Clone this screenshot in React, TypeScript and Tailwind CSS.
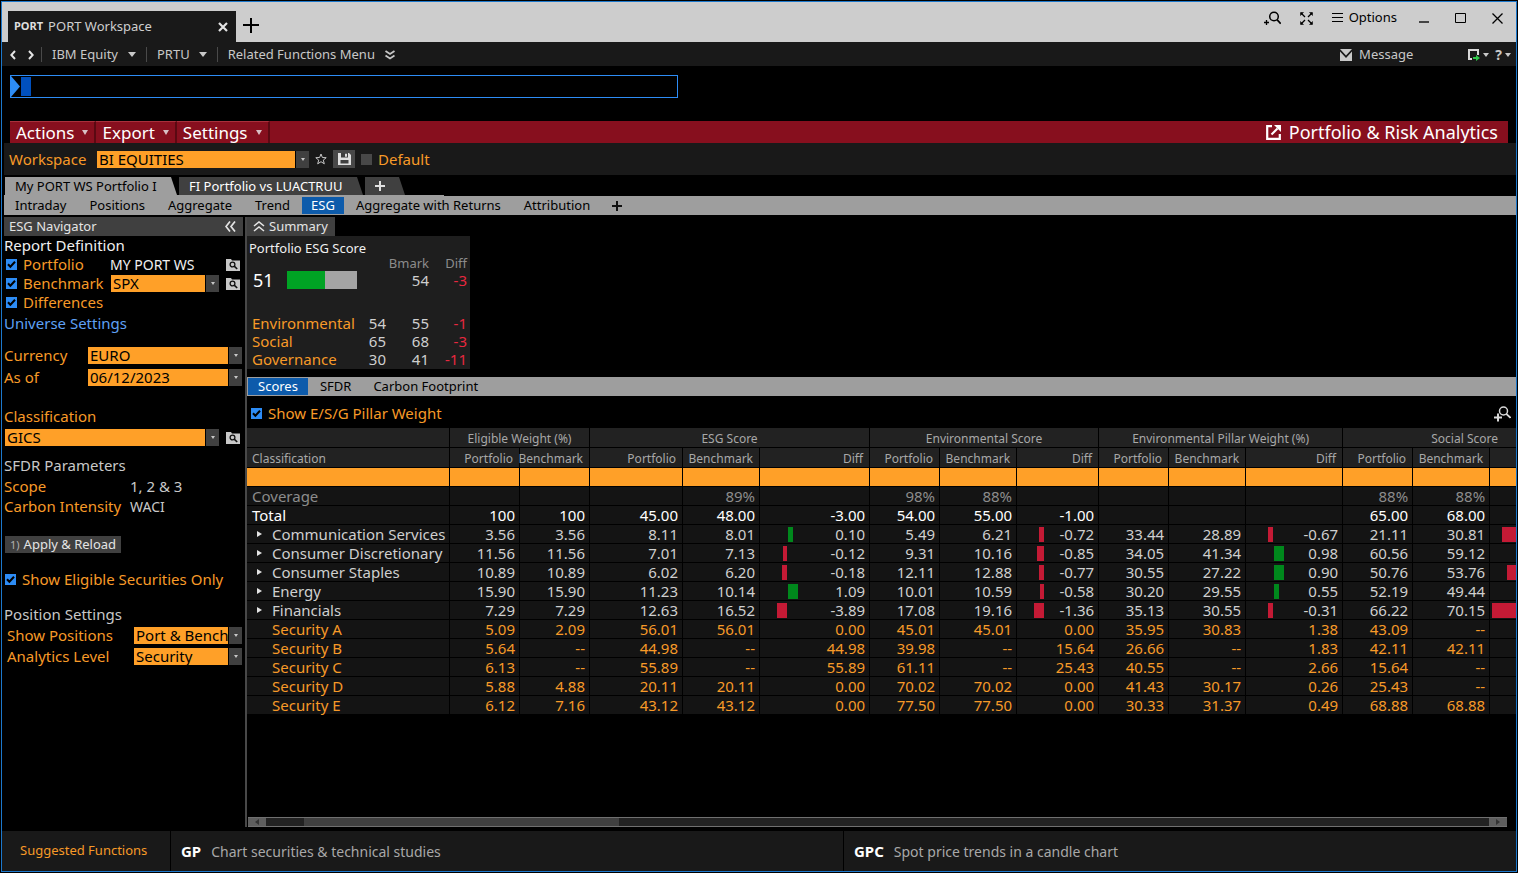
import React from 'react';

interface CellData {
  value?: string;
  bar?: number;
}

interface Row {
  name: string;
  kind: 'coverage' | 'total' | 'sector' | 'security';
  cells: (string | CellData)[];
}

const groups = [
  { title: 'Eligible Weight (%)', columns: ['Portfolio', 'Benchmark'] },
  { title: 'ESG Score', columns: ['Portfolio', 'Benchmark', 'Diff'] },
  { title: 'Environmental Score', columns: ['Portfolio', 'Benchmark', 'Diff'] },
  { title: 'Environmental Pillar Weight (%)', columns: ['Portfolio', 'Benchmark', 'Diff'] },
  { title: 'Social Score', columns: ['Portfolio', 'Benchmark', ''] },
];

const columnWidths = [203, 70, 70, 93, 77, 110, 70, 77, 82, 70, 77, 97, 70, 77, 97];

// bar is the signed length of the diff bar in pixels
const rows: Row[] = [
  { name: 'Coverage', kind: 'coverage', cells: ['', '', '', '89%', '', '98%', '88%', '', '', '', '', '88%', '88%', ''] },
  { name: 'Total', kind: 'total', cells: ['100', '100', '45.00', '48.00', '-3.00', '54.00', '55.00', '-1.00', '', '', '', '65.00', '68.00', ''] },
  { name: 'Communication Services', kind: 'sector', cells: ['3.56', '3.56', '8.11', '8.01', { value: '0.10', bar: 5 }, '5.49', '6.21', { value: '-0.72', bar: -5 }, '33.44', '28.89', { value: '-0.67', bar: -5 }, '21.11', '30.81', { bar: -15 }] },
  { name: 'Consumer Discretionary', kind: 'sector', cells: ['11.56', '11.56', '7.01', '7.13', { value: '-0.12', bar: -4 }, '9.31', '10.16', { value: '-0.85', bar: -7 }, '34.05', '41.34', { value: '0.98', bar: 10 }, '60.56', '59.12', ''] },
  { name: 'Consumer Staples', kind: 'sector', cells: ['10.89', '10.89', '6.02', '6.20', { value: '-0.18', bar: -5 }, '12.11', '12.88', { value: '-0.77', bar: -5 }, '30.55', '27.22', { value: '0.90', bar: 10 }, '50.76', '53.76', { bar: -10 }] },
  { name: 'Energy', kind: 'sector', cells: ['15.90', '15.90', '11.23', '10.14', { value: '1.09', bar: 10 }, '10.01', '10.59', { value: '-0.58', bar: -4 }, '30.20', '29.55', { value: '0.55', bar: 5 }, '52.19', '49.44', ''] },
  { name: 'Financials', kind: 'sector', cells: ['7.29', '7.29', '12.63', '16.52', { value: '-3.89', bar: -10 }, '17.08', '19.16', { value: '-1.36', bar: -10 }, '35.13', '30.55', { value: '-0.31', bar: -5 }, '66.22', '70.15', { bar: -25 }] },
  { name: 'Security A', kind: 'security', cells: ['5.09', '2.09', '56.01', '56.01', '0.00', '45.01', '45.01', '0.00', '35.95', '30.83', '1.38', '43.09', '--', ''] },
  { name: 'Security B', kind: 'security', cells: ['5.64', '--', '44.98', '--', '44.98', '39.98', '--', '15.64', '26.66', '--', '1.83', '42.11', '42.11', ''] },
  { name: 'Security C', kind: 'security', cells: ['6.13', '--', '55.89', '--', '55.89', '61.11', '--', '25.43', '40.55', '--', '2.66', '15.64', '--', ''] },
  { name: 'Security D', kind: 'security', cells: ['5.88', '4.88', '20.11', '20.11', '0.00', '70.02', '70.02', '0.00', '41.43', '30.17', '0.26', '25.43', '--', ''] },
  { name: 'Security E', kind: 'security', cells: ['6.12', '7.16', '43.12', '43.12', '0.00', '77.50', '77.50', '0.00', '30.33', '31.37', '0.49', '68.88', '68.88', ''] },
];

const rowColors = {
  coverage: 'text-[#8c8c8c]',
  total: 'text-white',
  sector: 'text-[#cfcfcf]',
  security: 'text-[#f79a28]',
};

const pillars = [
  { name: 'Environmental', score: 54, bmark: 55, diff: -1 },
  { name: 'Social', score: 65, bmark: 68, diff: -3 },
  { name: 'Governance', score: 30, bmark: 41, diff: -11 },
];

const Caret: React.FC<{ className?: string }> = ({ className = '' }) => (
  <svg viewBox="0 0 8 5" preserveAspectRatio="none" className={`shrink-0 ${className}`} fill="currentColor" aria-hidden="true">
    <path d="M0 0h8L4 5z" />
  </svg>
);

const SearchPlus: React.FC = () => (
  <svg width="17" height="15" viewBox="0 0 17 15" fill="none" stroke="currentColor" aria-hidden="true">
    <circle cx="10" cy="5.5" r="4.3" strokeWidth="1.5" />
    <path d="M13 8.700l3.700 4" strokeWidth="1.700" />
    <path d="M2.500 9v5M0 11.500h5" strokeWidth="1.300" />
  </svg>
);

const TableZoom: React.FC = () => (
  <svg width="17" height="16" viewBox="0 0 17 16" fill="none" stroke="currentColor" aria-hidden="true">
    <circle cx="9.500" cy="5" r="4" strokeWidth="1.500" />
    <path d="M12.300 7.800l4.200 4" strokeWidth="1.800" />
    <path d="M4 7.500v8M0 11.500h8" strokeWidth="2" />
  </svg>
);

const LookupButton: React.FC<{ label: string }> = ({ label }) => (
  <button type="button" aria-label={label} className="ml-auto mr-[3px] shrink-0">
    <svg width="14" height="12" viewBox="0 0 14 12" className="block" aria-hidden="true">
      <path d="M0 0h5l1 1.5h8V12H0z" fill="#c8c8c8" />
      <circle cx="6.5" cy="5.5" r="2.4" fill="none" stroke="#111" strokeWidth="1.3" />
      <path d="M8.2 7.2l3 2.8" stroke="#111" strokeWidth="1.6" />
    </svg>
  </button>
);

interface ComboProps {
  label: string;
  value: string;
  className?: string;
  id?: string;
}

const Combo: React.FC<ComboProps> = ({ label, value, className = '', id }) => (
  <span className={`relative flex h-[17px] shrink-0 bg-[#ffa028] ${className}`}>
    <select
      id={id}
      aria-label={label}
      defaultValue={value}
      className="h-full w-full appearance-none pl-[2px] text-[15px] leading-[17px] text-black outline-none"
    >
      <option>{value}</option>
    </select>
    <span className="pointer-events-none absolute inset-y-0 right-0 flex w-[14px] items-center justify-center border-l border-black bg-[#404040] text-[#c8c8c8]">
      <Caret className="h-[3px] w-[4px]" />
    </span>
  </span>
);

interface CheckProps {
  label: string;
  checked?: boolean;
}

const Check: React.FC<CheckProps> = ({ label, checked = true }) => (
  <label className="flex items-center gap-[6px] whitespace-nowrap text-[15px] text-[#f79a28]">
    <span className="relative flex">
      <input
        type="checkbox"
        defaultChecked={checked}
        className="peer size-[11px] appearance-none bg-[#484848] checked:bg-[#2d8cf5]"
      />
      <svg viewBox="0 0 11 11" className="pointer-events-none absolute inset-0 hidden size-[11px] peer-checked:block" fill="none" stroke="#000" strokeWidth="2">
        <path d="M2 5.2l2.4 2.6L9 2.8" />
      </svg>
    </span>
    {label}
  </label>
);

const TitleBar = () => (
  <header className="flex h-[40px] items-end bg-[#cdcdcd] text-black">
    <div className="ml-[6px] flex h-[31px] w-[228px] items-center bg-[#191919] pl-[6px] pr-[8px] text-[13px] text-[#cfcfcf]">
      <b className="mr-[5px] text-[11px] text-[#dedede]">PORT</b>
      <span>PORT Workspace</span>
      <button type="button" aria-label="Close tab" className="ml-auto">
        <svg width="10" height="10" viewBox="0 0 10 10" stroke="#e4e4e4" strokeWidth="2.2" aria-hidden="true">
          <path d="M1 1l8 8M9 1L1 9" />
        </svg>
      </button>
    </div>
    <button type="button" aria-label="New tab" className="mb-[9px] ml-[7px]">
      <svg width="16" height="15" viewBox="0 0 16 15" stroke="currentColor" strokeWidth="2" className="block" aria-hidden="true">
        <path d="M8 0v15M0 7h16" />
      </svg>
    </button>
    <div className="ml-auto mr-[13px] flex h-[32px] items-center self-start text-[13px]">
      <button type="button" aria-label="Zoom"><SearchPlus /></button>
      <button type="button" aria-label="Full screen" className="ml-[19px]">
        <svg width="13" height="13" viewBox="0 0 13 13" stroke="currentColor" strokeWidth="1.300" aria-hidden="true">
          <path d="M1 1l4 4M12 1L8 5M12 12L8 8M1 12l4-4" />
          <path d="M.5.5h3l-3 3zM12.500.5v3l-3-3zM12.500 12.500h-3l3-3zM.5 12.500v-3l3 3z" fill="currentColor" strokeWidth=".5" />
        </svg>
      </button>
      <button type="button" className="ml-[19px] flex items-center gap-[6px]">
        <svg width="11" height="10" viewBox="0 0 11 10" fill="currentColor" aria-hidden="true">
          <path d="M0 0h11v1H0zM0 4h11v1H0zM0 8h11v1H0z" />
        </svg>
        Options
      </button>
      <button type="button" aria-label="Minimize" className="ml-[22px]">
        <svg width="10" height="11" viewBox="0 0 10 11" fill="#444" aria-hidden="true"><path d="M0 8h10v2H0z" /></svg>
      </button>
      <button type="button" aria-label="Maximize" className="ml-[26px]">
        <svg width="11" height="11" viewBox="0 0 11 11" fill="none" stroke="currentColor" aria-hidden="true"><path d="M.5.5h10v9H.5z" /></svg>
      </button>
      <button type="button" aria-label="Close" className="ml-[26px]">
        <svg width="11" height="11" viewBox="0 0 11 11" stroke="currentColor" strokeWidth="1.3" aria-hidden="true"><path d="M.5.500l10 10M10.500.5l-10 10" /></svg>
      </button>
    </div>
  </header>
);

const Divider = () => <span className="h-[15px] w-px bg-[#4a4a4a]" />;

const NavBar = () => (
  <nav className="flex h-[24px] items-center bg-[#191919] pt-px text-[13px] text-[#c8c8c8]">
    <button type="button" aria-label="Back" className="ml-[8px]">
      <svg width="6" height="10" viewBox="0 0 6 10" fill="none" stroke="#e4e4e4" strokeWidth="2" aria-hidden="true"><path d="M5 1L1.3 5 5 9" /></svg>
    </button>
    <button type="button" aria-label="Forward" className="ml-[12px] mr-[7px]">
      <svg width="6" height="10" viewBox="0 0 6 10" fill="none" stroke="#e4e4e4" strokeWidth="2" aria-hidden="true"><path d="M1 1l3.7 4L1 9" /></svg>
    </button>
    <Divider />
    <button type="button" className="flex items-center gap-[10px] px-[10px]">IBM Equity <Caret className="h-[5px] w-[8px]" /></button>
    <Divider />
    <button type="button" className="flex items-center gap-[9px] px-[10px]">PRTU <Caret className="h-[5px] w-[8px]" /></button>
    <Divider />
    <button type="button" className="flex items-center gap-[10px] px-[10px]">
      Related Functions Menu
      <svg width="10" height="10" viewBox="0 0 10 10" fill="none" stroke="currentColor" strokeWidth="1.8" aria-hidden="true">
        <path d="M.5 1L5 4l4.500-3M.5 5.500l4.500 3 4.500-3" />
      </svg>
    </button>
    <button type="button" className="ml-auto flex items-center gap-[7px]">
      <svg width="12" height="12" viewBox="0 0 12 12" fill="currentColor" aria-hidden="true">
        <path d="M0 0h12L6 6.5zM0 2.5l6 6.5 6-6.500V12H0z" />
      </svg>
      Message
    </button>
    <button type="button" aria-label="Send to" className="ml-[55px] flex items-center gap-[3px]">
      <svg width="12" height="12" viewBox="0 0 12 12" fill="none" aria-hidden="true">
        <path d="M4 10H1V1h9v5" stroke="#d8d8d8" strokeWidth="2" />
        <path d="M5 8h3V6l4 3-4 3v-2H5z" fill="#2fc84a" />
      </svg>
      <Caret className="h-[4px] w-[6px]" />
    </button>
    <button type="button" aria-label="Help" className="ml-[6px] mr-[5px] flex items-center gap-[3px] text-[14px] font-bold">
      ? <Caret className="h-[4px] w-[6px]" />
    </button>
  </nav>
);

const MenuBar = () => (
  <div className="ml-[8px] mr-[8px] flex h-[22px] items-stretch bg-[#870f1e] text-white">
    {['Actions', 'Export', 'Settings'].map((item) => (
      <button key={item} type="button" className="flex items-center gap-[8px] border-r-2 border-t border-r-[#5a0912] border-t-[#a8303c] px-[6px] text-[17px] leading-[21px]">
        {item} <Caret className="h-[5px] w-[6px] text-[#d8c0c4]" />
      </button>
    ))}
    <a href="#analytics" className="ml-auto mr-[10px] flex items-center gap-[8px] text-[18px] leading-[22px]">
      <svg width="15" height="15" viewBox="0 0 15 15" fill="none" stroke="currentColor" strokeWidth="2.2" aria-hidden="true">
        <path d="M6 1.2H1.200v12.600h12.600V9" />
        <path d="M5.500 9.500l6-6" />
        <path d="M8 0h7v7z" fill="currentColor" stroke="none" />
      </svg>
      Portfolio &amp; Risk Analytics
    </a>
  </div>
);

const WorkspaceBar = () => (
  <div className="ml-[2px] flex h-[32px] items-center bg-[#191919] pl-[5px] text-[15px] text-[#f79a28]">
    <label htmlFor="workspace" className="w-[88px]">Workspace</label>
    <Combo id="workspace" label="Workspace" value="BI EQUITIES" className="w-[212px]" />
    <button type="button" aria-label="Favorite" className="ml-[6px] text-[#c8c8c8]">
      <svg width="12" height="12" viewBox="0 0 12 12" fill="none" stroke="currentColor" aria-hidden="true">
        <path d="M6 1l1.400 3.500 3.800.2-2.900 2.400 1 3.700L6 8.700l-3.300 2.100 1-3.700L.8 4.700l3.800-.2z" />
      </svg>
    </button>
    <button type="button" aria-label="Save" className="mx-[6px] flex h-[18px] w-[22px] items-center justify-center bg-[#484848]">
      <svg width="13" height="12" viewBox="0 0 13 12" aria-hidden="true">
        <path d="M0 0h11l2 2v10H0z" fill="#e0e0e0" />
        <path d="M3 0h7v4.500H3zM2.500 7h8v3.500h-8z" fill="#404040" />
        <path d="M7 .8h2v3H7z" fill="#e0e0e0" />
      </svg>
    </button>
    <Check label="Default" checked={false} />
  </div>
);

const slant = '[clip-path:polygon(0_0,calc(100%-6px)_0,100%_100%,0_100%)]';

const PortfolioTabs = () => (
  <div className="ml-[2px] mt-[2px] text-[13px]">
    <div className="ml-px flex h-[18px] gap-[2px] text-white">
      <button type="button" className={`w-[172px] bg-[#9e9e9e] pl-[10px] text-left leading-[18px] text-black ${slant}`}>My PORT WS Portfolio I</button>
      <button type="button" className={`w-[184px] bg-[#404040] pl-[10px] text-left leading-[18px] ${slant}`}>FI Portfolio vs LUACTRUU</button>
      <button type="button" aria-label="Add portfolio" className={`w-[40px] bg-[#404040] pl-[10px] ${slant}`}>
        <svg width="10" height="10" viewBox="0 0 10 10" stroke="#e0e0e0" strokeWidth="2" aria-hidden="true"><path d="M5 0v10M0 5h10" /></svg>
      </button>
    </div>
    <div className="h-px w-[440px] bg-[#9e9e9e]" />
    <div className="flex h-[19px] gap-px bg-[#9e9e9e] py-px leading-[17px]">
      {['Intraday', 'Positions', 'Aggregate', 'Trend', 'ESG', 'Aggregate with Returns', 'Attribution'].map((tab) => (
        <button key={tab} type="button" className={tab === 'ESG' ? 'bg-[#0d5bab] px-[9px] text-white' : 'px-[11px] text-black'}>
          {tab}
        </button>
      ))}
      <button type="button" aria-label="Add view" className="px-[10px]">
        <svg width="10" height="10" viewBox="0 0 10 10" stroke="#111" strokeWidth="2" aria-hidden="true"><path d="M5 0v10M0 5h10" /></svg>
      </button>
    </div>
  </div>
);

const Navigator = () => (
  <aside className="ml-[2px] w-[239px] shrink-0 text-[15px] leading-[19px] text-[#f79a28]">
    <div className="flex h-[19px] items-center justify-between bg-[#404040] pl-[5px] pr-[7px] text-[13px] text-[#e4e4e4]">
      <h2>ESG Navigator</h2>
      <button type="button" aria-label="Collapse">
        <svg width="11" height="11" viewBox="0 0 11 11" fill="none" stroke="currentColor" strokeWidth="1.7" aria-hidden="true">
          <path d="M5 .5L1 5.500l4 5M10 .5L6 5.500l4 5" />
        </svg>
      </button>
    </div>
    <h3 className="h-[19px] text-[#f0f0f0]">Report Definition</h3>
    <div className="flex h-[19px] items-center pl-[2px]">
      <div className="w-[104px]"><Check label="Portfolio" /></div>
      <span className="text-[14px] text-[#f0f0f0]">MY PORT WS</span>
      <LookupButton label="Find portfolio" />
    </div>
    <div className="flex h-[19px] items-center pl-[2px]">
      <div className="w-[105px]"><Check label="Benchmark" /></div>
      <Combo label="Benchmark" value="SPX" className="w-[108px]" />
      <LookupButton label="Find benchmark" />
    </div>
    <div className="flex h-[19px] items-center pl-[2px]"><Check label="Differences" /></div>
    <a href="#universe" className="mt-[2px] block h-[19px] text-[#5ea0f5]">Universe Settings</a>
    <div className="mt-[13px] flex h-[19px] items-center">
      <label htmlFor="currency" className="w-[84px]">Currency</label>
      <Combo id="currency" label="Currency" value="EURO" className="w-[154px]" />
    </div>
    <div className="mt-[3px] flex h-[19px] items-center">
      <label htmlFor="as-of" className="w-[84px]">As of</label>
      <Combo id="as-of" label="As of" value="06/12/2023" className="w-[154px]" />
    </div>
    <label htmlFor="classification" className="mt-[20px] block h-[19px]">Classification</label>
    <div className="mt-[2px] flex h-[19px] items-center pl-px">
      <Combo id="classification" label="Classification" value="GICS" className="w-[214px]" />
      <LookupButton label="Find classification" />
    </div>
    <h3 className="mt-[9px] h-[19px] text-[#c8c8c8]">SFDR Parameters</h3>
    <dl className="mt-[2px] grid grid-cols-[126px_1fr] gap-y-px">
      <dt>Scope</dt>
      <dd className="text-[#c8c8c8]">1, 2 &amp; 3</dd>
      <dt className="whitespace-nowrap">Carbon Intensity</dt>
      <dd className="text-[14px] text-[#c8c8c8]">WACI</dd>
    </dl>
    <button type="button" className="ml-px mt-[20px] flex h-[17px] items-center gap-[4px] bg-[#404040] px-[5px] text-[13px] text-[#e4e4e4]">
      <span className="text-[11px] text-[#b0b0b0]">1)</span> Apply &amp; Reload
    </button>
    <div className="mt-[17px] flex h-[19px] items-center pl-px"><Check label="Show Eligible Securities Only" /></div>
    <h3 className="mt-[16px] h-[19px] text-[#c8c8c8]">Position Settings</h3>
    <div className="mt-[2px] flex h-[19px] items-center pl-[3px]">
      <label htmlFor="positions" className="w-[127px] whitespace-nowrap">Show Positions</label>
      <Combo id="positions" label="Show Positions" value="Port &amp; Bench" className="w-[108px]" />
    </div>
    <div className="mt-[2px] flex h-[19px] items-center pl-[3px]">
      <label htmlFor="level" className="w-[127px] whitespace-nowrap">Analytics Level</label>
      <Combo id="level" label="Analytics Level" value="Security" className="w-[108px]" />
    </div>
  </aside>
);

const Summary = () => (
  <section>
    <button type="button" className="flex h-[19px] w-[88px] items-center gap-[4px] bg-[#404040] pl-[6px] text-[13px] text-[#e4e4e4]">
      <svg width="12" height="11" viewBox="0 0 12 11" fill="none" stroke="currentColor" strokeWidth="1.6" aria-hidden="true">
        <path d="M1 5l5-4 5 4M1 10l5-4 5 4" />
      </svg>
      Summary
    </button>
    <div className="h-[133px] w-[223px] bg-[#1e1e1e] pl-[2px]">
      <h3 className="h-[21px] text-[13px] leading-[24px] text-[#f0f0f0]">Portfolio ESG Score</h3>
      <table className="w-[218px] table-fixed text-right text-[15px] leading-[18px] text-[#cfcfcf]">
        <colgroup>
          <col className="w-[103px]" />
          <col className="w-[34px]" />
          <col className="w-[43px]" />
          <col className="w-[38px]" />
        </colgroup>
        <thead>
          <tr className="h-[12px] text-[13px] leading-[12px] text-[#8c8c8c]">
            <td colSpan={2} />
            <th className="font-normal">Bmark</th>
            <th className="font-normal">Diff</th>
          </tr>
        </thead>
        <tbody>
          <tr className="h-[22px]">
            <td colSpan={2}>
              <div className="flex items-center gap-[13px] pl-[4px] text-[18px] text-white">
                51
                <div className="flex h-[18px] w-[70px] bg-[#a4a4a4]"><div className="w-[38px] bg-[#00a324]" /></div>
              </div>
            </td>
            <td>54</td>
            <td className="text-[#e8283f]">-3</td>
          </tr>
          <tr className="h-[23px]"><td colSpan={4} /></tr>
          {pillars.map((p) => (
            <tr key={p.name}>
              <th className="pl-[3px] text-left font-normal text-[#f79a28]">{p.name}</th>
              <td>{p.score}</td>
              <td>{p.bmark}</td>
              <td className="text-[#e8283f]">{p.diff}</td>
            </tr>
          ))}
        </tbody>
      </table>
    </div>
  </section>
);

const DiffBar: React.FC<{ bar: number }> = ({ bar }) => (
  <span className="flex h-[15px] gap-px">
    <span className="flex w-[27px] justify-end">
      {bar < 0 && <span className="bg-[#c41a35]" style={{ width: -bar }} />}
    </span>
    {bar > 0 && <span className="bg-[#00881c]" style={{ width: bar }} />}
  </span>
);

const ScoreTable = () => (
  <div className="overflow-hidden">
    <table className="w-[1340px] table-fixed border-separate border-spacing-0 text-right text-[15px] leading-[18px]">
      <colgroup>
        {columnWidths.map((width, i) => <col key={i} style={{ width }} />)}
      </colgroup>
      <thead className="text-[12px] leading-[17px] text-[#a8a8a8]">
        <tr className="bg-[#222222]">
          <th className="h-[20px] border-b border-r border-black" />
          {groups.map((g) => (
            <th key={g.title} colSpan={g.columns.length} className="h-[20px] border-b border-r border-black pt-[2px] text-center font-normal">{g.title}</th>
          ))}
        </tr>
        <tr className="bg-[#222222]">
          <th className="h-[20px] border-b border-r border-black pl-[5px] pt-[2px] text-left font-normal">Classification</th>
          {groups.flatMap((g) => g.columns.map((c) => (
            <th key={g.title + c} className="h-[20px] border-b border-r border-black pr-[6px] pt-[2px] font-normal">
              <span className="flex justify-end">{c}</span>
            </th>
          )))}
        </tr>
        <tr className="bg-[#ffa028]">
          {columnWidths.map((_, i) => (
            <th key={i} className="h-[19px] border-b border-r border-black">
              <input type="text" aria-label={`Filter column ${i + 1}`} className="block h-[18px] w-full px-1 text-black outline-none" />
            </th>
          ))}
        </tr>
      </thead>
      <tbody>
        {rows.map((row) => (
          <tr key={row.name} className={`bg-[#141414] ${rowColors[row.kind]}`}>
            <th className="h-[19px] border-b border-r border-black pl-[5px] text-left font-normal">
              <span className="flex items-center whitespace-nowrap">
                {row.kind === 'sector' && (
                  <button type="button" aria-label={`Expand ${row.name}`} className="ml-[5px] mr-[10px]">
                    <svg width="5" height="6" viewBox="0 0 5 6" fill="#e4e4e4" className="block" aria-hidden="true"><path d="M0 0l5 3-5 3z" /></svg>
                  </button>
                )}
                <span className={row.kind === 'security' ? 'ml-[20px]' : ''}>{row.name}</span>
              </span>
            </th>
            {row.cells.map((cell, i) => {
              const data = typeof cell === 'string' ? { value: cell } : cell;
              return (
                <td key={i} className="h-[19px] border-b border-r border-black pr-[4px]">
                  {data.bar ? (
                    <span className="flex items-center justify-between">
                      <DiffBar bar={data.bar} />
                      {data.value}
                    </span>
                  ) : data.value}
                </td>
              );
            })}
          </tr>
        ))}
      </tbody>
    </table>
  </div>
);

const ScrollBar = () => (
  <div className="ml-px mr-[9px] mt-auto flex h-[10px] border-y border-[#707070] bg-[#222222]">
    <button type="button" aria-label="Scroll left" className="flex w-[18px] items-center justify-center bg-[#5e5e5e]">
      <svg width="4" height="6" viewBox="0 0 4 6" fill="#333" aria-hidden="true"><path d="M4 0v6L0 3z" /></svg>
    </button>
    <div className="ml-[38px] w-1/4 bg-[#404040]" />
    <button type="button" aria-label="Scroll right" className="ml-auto flex w-[18px] items-center justify-center bg-[#5e5e5e]">
      <svg width="4" height="6" viewBox="0 0 4 6" fill="#333" aria-hidden="true"><path d="M0 0v6l4-3z" /></svg>
    </button>
  </div>
);

const Report = () => (
  <main className="ml-[2px] flex min-w-0 flex-1 flex-col border-l-2 border-[#484848]">
    <Summary />
    <div className="mt-[8px] flex h-[19px] bg-[#9e9e9e] p-px text-[13px] leading-[17px] text-black">
      <button type="button" className="bg-[#0d5bab] px-[10px] text-white">Scores</button>
      <button type="button" className="px-[12px]">SFDR</button>
      <button type="button" className="px-[10px]">Carbon Footprint</button>
    </div>
    <div className="flex h-[32px] items-center justify-between pl-[4px] pr-[5px] pt-[3px] text-[#d8d8d8]">
      <Check label="Show E/S/G Pillar Weight" />
      <button type="button" aria-label="Zoom table"><TableZoom /></button>
    </div>
    <ScoreTable />
    <ScrollBar />
  </main>
);

const SuggestedFunctions = () => (
  <footer className="mt-[4px] flex h-[40px] items-center bg-[#191919] text-[14px] text-[#a8a8a8]">
    <div className="flex h-full w-[169px] shrink-0 items-center border-r border-black pl-[18px] text-[13px] text-[#f79a28]">Suggested Functions</div>
    <button type="button" className="flex h-full flex-1 items-center gap-[10px] border-r border-black pl-[10px]">
      <b className="text-[15px] text-white">GP</b> Chart securities &amp; technical studies
    </button>
    <button type="button" className="flex h-full flex-1 items-center gap-[10px] pl-[10px]">
      <b className="text-[15px] text-white">GPC</b> Spot price trends in a candle chart
    </button>
  </footer>
);

export default function App() {
  return (
    <div className="flex min-h-screen bg-black p-px font-['Noto_Sans',sans-serif]">
      <div className="flex min-w-0 flex-1 flex-col border border-[#1c78cc]">
        <TitleBar />
        <NavBar />
        <div className="mb-[23px] ml-[8px] mt-[9px] flex h-[23px] w-[668px] items-center border border-[#2d8cf5]">
          <svg width="9" height="21" viewBox="0 0 9 21" fill="#2d8cf5" aria-hidden="true"><path d="M0 0l9 10.500L0 21z" /></svg>
          <span className="ml-px h-[19px] w-[10px] bg-[#0050be]" />
          <input type="text" aria-label="Command line" className="h-full flex-1 px-1 text-[15px] text-[#f79a28] outline-none" />
        </div>
        <MenuBar />
        <WorkspaceBar />
        <PortfolioTabs />
        <div className="mt-[2px] flex flex-1">
          <Navigator />
          <Report />
        </div>
        <SuggestedFunctions />
      </div>
    </div>
  );
}
